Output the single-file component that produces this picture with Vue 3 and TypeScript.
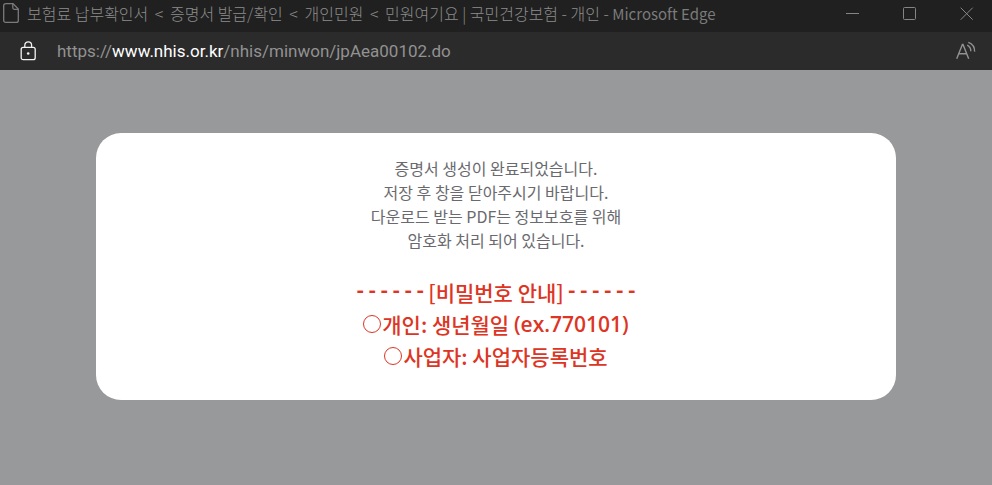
<script setup lang="ts">
const crumbs: string[] = ['보험료 납부확인서', '증명서 발급/확인', '개인민원', '민원여기요']
const site = '국민건강보험 - 개인 -'

const url = { scheme: 'https://', host: 'www.nhis.or.kr', path: '/nhis/minwon/jpAea00102.do' }

const messages: string[] = [
  '증명서 생성이 완료되었습니다.',
  '저장 후 창을 닫아주시기 바랍니다.',
  '다운로드 받는 PDF는 정보보호를 위해',
  '암호화 처리 되어 있습니다.',
]
</script>

<template>
  <div class="window">
    <header class="titlebar">
      <svg class="doc" width="16" height="22" viewBox="0 0 16 22" fill="none" stroke="currentColor" stroke-width="1.3">
        <path d="M2.5 1.6H10L15.3 7v11.4a2 2 0 0 1-2 2H2.7a2 2 0 0 1-2-2V3.6a2 2 0 0 1 2-2Z" />
        <path d="M9.8 1.8v4a1.5 1.5 0 0 0 1.5 1.5h3.8" />
      </svg>
      <h1 class="title">
        <template v-for="(crumb, i) in crumbs" :key="i"><span v-if="i > 0" class="sep"> &lt; </span>{{ crumb }}</template> | {{ site }} <span class="app">Microsoft Edge</span>
      </h1>
      <div class="controls">
        <button type="button" aria-label="최소화">
          <svg width="14" height="14" viewBox="0 0 14 14"><path d="M0 6.5h13" /></svg>
        </button>
        <button type="button" aria-label="최대화">
          <svg width="14" height="14" viewBox="0 0 14 14"><rect x=".5" y=".5" width="12" height="12" rx="1" /></svg>
        </button>
        <button type="button" aria-label="닫기">
          <svg width="14" height="14" viewBox="0 0 14 14"><path d="M.7.7l12 12M12.7.7l-12 12" /></svg>
        </button>
      </div>
    </header>

    <nav class="addressbar">
      <button class="lock" type="button" aria-label="사이트 정보 보기">
        <svg width="16" height="20" viewBox="0 0 16 20" fill="none" stroke="currentColor" stroke-width="1.3">
          <rect x="1.2" y="6.3" width="14" height="12.4" rx="2" />
          <path d="M4.8 6.3V4.2a3.4 3.4 0 0 1 6.8 0v2.1" />
          <circle cx="8.2" cy="12.5" r="1.3" fill="currentColor" stroke="none" />
        </svg>
      </button>
      <a class="url" :href="url.scheme + url.host + url.path">{{ url.scheme }}<span class="host">{{ url.host }}</span>{{ url.path }}</a>
      <button class="read" type="button" aria-label="소리내어 읽기">
        <svg width="20" height="20" viewBox="0 0 20 20" fill="none" stroke="currentColor" stroke-width="1.4">
          <path d="M.7 17.8 6.4 3.5h.6l5.7 14.3M2.8 12.7h7.8" />
          <path d="M11.2 4.2a6.4 6.4 0 0 1 3.6 6M12.3 1.3a9.5 9.5 0 0 1 6.3 9.3" />
        </svg>
      </button>
    </nav>

    <main class="page">
      <section class="card">
        <p class="message"><template v-for="(line, i) in messages" :key="i"><br v-if="i > 0" />{{ line }}</template></p>
        <p class="notice">
          <span class="row heading"><span class="dashes">------</span>[비밀번호 안내]<span class="dashes">------</span></span>
          <span class="row"><i class="bullet"></i>개인: 생년월일&nbsp;<span class="example">(ex.770101)</span></span>
          <span class="row"><i class="bullet"></i>사업자: 사업자등록번호</span>
        </p>
      </section>
    </main>
  </div>
</template>

<style>
body {
  background: #98999b;
}
</style>

<style scoped>
.window {
  min-height: 100vh;
  display: flex;
  flex-direction: column;
  background: #98999b;
  font-family: "Noto Sans CJK KR", sans-serif;
}

button {
  display: flex;
  align-items: center;
  justify-content: center;
  padding: 0;
  border: 0;
  background: none;
  color: inherit;
}

.titlebar {
  display: flex;
  align-items: center;
  height: 32px;
  padding: 0 2px 4px 3px;
  box-sizing: border-box;
  background: #202020;
  color: #8c8c8c;
}

.doc {
  flex: none;
  margin-bottom: 2px;
  color: #7b7b7b;
}

.title {
  flex: 1;
  min-width: 0;
  margin: 0 0 2px 8px;
  overflow: hidden;
  font-size: 16px;
  font-weight: 300;
  line-height: 24px;
  white-space: nowrap;
}

.sep {
  padding: 0 3px;
}

.app {
  font-size: 15px;
  font-weight: 400;
  color: #7b7b7b;
}

.controls {
  display: flex;
  gap: 11px;
}

.controls button {
  width: 46px;
  height: 28px;
}

.controls svg {
  fill: none;
  stroke: #858585;
  stroke-width: 1;
}

.addressbar {
  display: flex;
  align-items: center;
  height: 38px;
  padding: 0 16px 0 20px;
  box-sizing: border-box;
  background: #2b2b2b;
  color: #929292;
}

.lock {
  color: #f2f2f2;
}

.url {
  flex: 1;
  margin-left: 21px;
  font-family: Roboto, sans-serif;
  font-size: 17px;
  line-height: 24px;
  color: inherit;
  text-decoration: none;
}

.host {
  color: #fff;
}

.page {
  flex: 1;
  padding: 63px 96px;
}

.card {
  padding: 23px 24px 28px;
  border-radius: 25px;
  background: #fff;
  text-align: center;
}

.message {
  margin: 0 0 24px;
  font-size: 16px;
  line-height: 24px;
  color: #6a6a6e;
}

.notice {
  display: flex;
  flex-direction: column;
  align-items: center;
  margin: 0;
  font-size: 21px;
  font-weight: 500;
  line-height: 32px;
  color: #dd3524;
}

.row {
  display: flex;
  align-items: center;
}

.heading {
  gap: 2px;
}

.dashes {
  font-family: "Liberation Mono", monospace;
  font-size: 20px;
  font-weight: 700;
}

.example {
  font-family: "Open Sans", sans-serif;
  font-weight: 600;
}

.bullet {
  width: 16px;
  height: 16px;
  margin-right: 1px;
  border: 1px solid currentColor;
  border-radius: 50%;
}
</style>
